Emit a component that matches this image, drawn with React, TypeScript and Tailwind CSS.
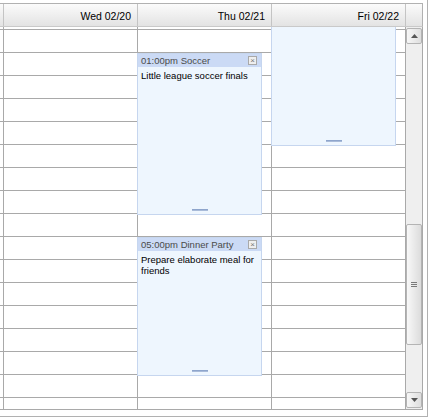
const days = ["Wed 02/20", "Thu 02/21", "Fri 02/22"]
const rows = Array.from({ length: 17 })

type EventProps = {
  className: string
  time?: string
  title?: string
  text?: string
}

const CalEvent = ({ className, time, title, text }: EventProps) => (
  <div className={`absolute left-[-1px] w-[125px] border border-[#c6d6ef] bg-[#eef6fe] ${className}`}>
    {time && (
      <div className="flex h-[13px] items-center justify-between bg-[#cbdaf5] pl-[3px] pr-[4px]">
        <span className="text-[9.5px] leading-[13px] text-[#4a4a4a]">{time} {title}</span>
        <span className="flex h-[9px] w-[9px] items-center justify-center border border-[#a9a9a9] bg-[#efefef] text-[8px] leading-none text-[#777]">×</span>
      </div>
    )}
    {text && <p className="px-[3px] pt-[3px] text-[9.5px] leading-[11px] text-black">{text}</p>}
    <div className="absolute bottom-[3px] left-1/2 h-[2px] w-[16px] -translate-x-1/2 border-b border-t border-b-[#a9bbd9] border-t-[#8ea5cc]" />
  </div>
)

const Column = ({ children, stub }: { children?: React.ReactNode; stub?: boolean }) => (
  <div className={`relative flex flex-col ${stub ? "w-[3px]" : "w-[134px] border-l border-[#a9a9a9]"}`}>
    <div className="h-[3px] shrink-0 border-b border-[#a9a9a9]" />
    {rows.map((_, i) => (
      <div key={i} className="h-[23px] shrink-0 border-b border-[#a9a9a9]" />
    ))}
    {children}
  </div>
)

const ScrollButton = ({ down }: { down?: boolean }) => (
  <div className="flex h-[16px] items-center justify-center rounded-[2px] border border-[#b4b4b4] bg-gradient-to-r from-[#f7f7f7] to-[#dedede]">
    <svg width="7" height="4" viewBox="0 0 7 4">
      <path d={down ? "M0 0H7L3.5 4Z" : "M0 4H7L3.5 0Z"} fill="#555" />
    </svg>
  </div>
)

export default function App() {
  return (
    <div className="h-[417px] w-[435px] bg-white" style={{ fontFamily: '"Liberation Sans", Arial, sans-serif' }}>
      <div className="flex h-[417px] w-[428px] flex-col border-b border-r border-[#b1b1b1] pt-[3px]">
        {/* header */}
        <div className="flex h-[24px] w-[423px] border-b border-r border-t border-b-[#c9c9c9] border-r-[#b1b1b1] border-t-[#b1b1b1] bg-gradient-to-b from-[#fbfbfb] to-[#e3e3e3]">
          <div className="w-[3px]" />
          {days.map((d) => (
            <div key={d} className="w-[134px] border-l border-[#c4c4c4] pr-[6px] pt-[6px] text-right text-[10.5px] leading-[13px] text-black">
              {d}
            </div>
          ))}
          <div className="flex-1 border-l border-[#c4c4c4]" />
        </div>

        {/* body */}
        <div className="flex h-[383px] w-[423px] overflow-hidden border-b border-r border-[#a9a9a9]">
          <Column stub />
          <Column />
          <Column>
            <CalEvent className="top-[26px] h-[162px]" time="01:00pm" title="Soccer" text="Little league soccer finals" />
            <CalEvent className="top-[210px] h-[139px]" time="05:00pm" title="Dinner Party" text="Prepare elaborate meal for friends" />
          </Column>
          <Column>
            <CalEvent className="top-[-20px] h-[139px]" />
          </Column>
          <div className="flex w-[17px] flex-col border-l border-[#a9a9a9] bg-[#efefef] py-[1px]">
            <ScrollButton />
            <div className="mt-[180px] flex h-[121px] items-center justify-center rounded-[2px] border border-[#b4b4b4] bg-gradient-to-r from-[#f8f8f8] to-[#dcdcdc]">
              <div className="flex flex-col gap-[1px]">
                <div className="h-[1px] w-[6px] bg-[#7a7a7a]" />
                <div className="h-[1px] w-[6px] bg-[#7a7a7a]" />
                <div className="h-[1px] w-[6px] bg-[#7a7a7a]" />
              </div>
            </div>
            <div className="flex-1" />
            <ScrollButton down />
          </div>
        </div>
      </div>
    </div>
  )
}
